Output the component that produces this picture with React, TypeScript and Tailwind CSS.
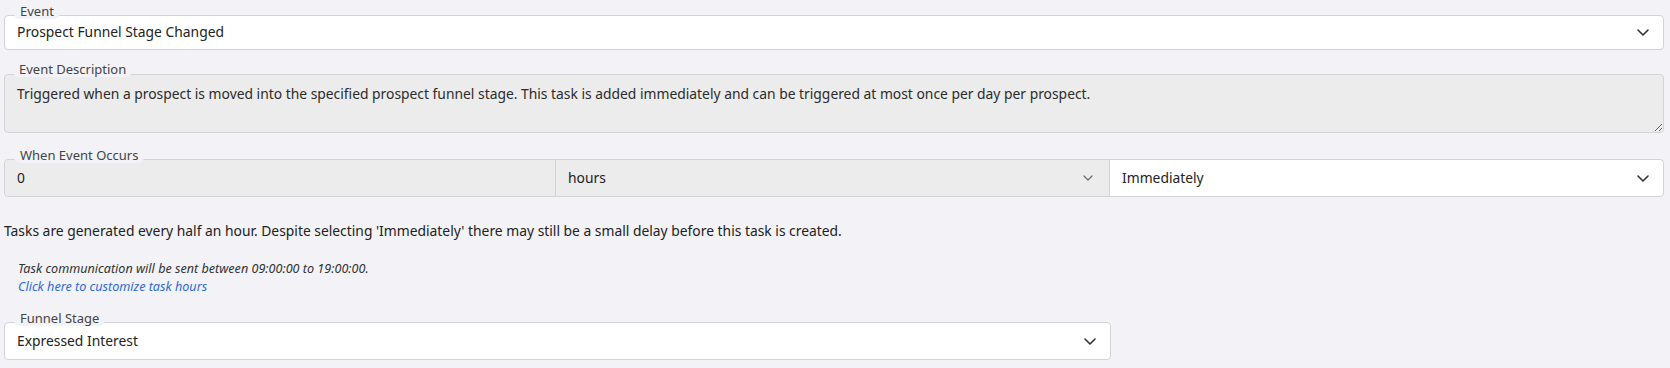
import React from "react";

const Chevron = ({ className = "" }: { className?: string }) => (
  <svg width="12" height="7" viewBox="0 0 12 7" fill="none" className={className}>
    <polyline points="1,1 6,6 11,1" stroke="currentColor" strokeWidth="1.6" strokeLinecap="round" strokeLinejoin="round" />
  </svg>
);

const FieldLabel = ({ children }: { children: React.ReactNode }) => (
  <span className="absolute left-[9px] top-[-12px] z-10 rounded-[6px] bg-[#f2f2f7] px-[6px] text-[13px] leading-[15px] text-[#444]">
    {children}
  </span>
);

export default function App() {
  return (
    <div
      className="min-h-[368px] w-full bg-[#f2f2f7] pl-[4px] pr-[6px] pt-[15px] text-[13.85px] text-[#222]"
      style={{ fontFamily: '"Noto Sans", "Open Sans", sans-serif' }}
    >
      {/* Event */}
      <div className="relative flex h-[35px] items-center justify-between rounded-[4px] border border-[#d2d3d8] bg-white pl-[12px] pr-[14px]">
        <FieldLabel>Event</FieldLabel>
        <span>Prospect Funnel Stage Changed</span>
        <Chevron className="text-[#333]" />
      </div>

      {/* Event Description */}
      <div className="relative mt-[24px]">
        <FieldLabel>Event Description</FieldLabel>
        <textarea
          readOnly
          value="Triggered when a prospect is moved into the specified prospect funnel stage. This task is added immediately and can be triggered at most once per day per prospect."
          className="block h-[59px] w-full rounded-[4px] border border-[#d2d3d8] bg-[#ececec] px-[12px] py-[9px] text-[13.85px] leading-[20px] text-[#2b2b2b] outline-none"
          style={{ fontFamily: '"Noto Sans", "Open Sans", sans-serif' }}
        />
      </div>

      {/* When Event Occurs */}
      <div className="relative mt-[26px] grid h-[38px] grid-cols-[550px_554px_1fr] rounded-[4px] border border-[#d2d3d8]">
        <FieldLabel>When Event Occurs</FieldLabel>
        <div className="flex items-center rounded-l-[4px] bg-[#ececec] pl-[12px]">0</div>
        <div className="flex items-center justify-between border-l border-[#d2d3d8] bg-[#ececec] pl-[12px] pr-[16px]">
          <span>hours</span>
          <svg width="10" height="6" viewBox="0 0 10 6" fill="none" className="text-[#6b6b6b]">
            <polyline points="1,1 5,5 9,1" stroke="currentColor" strokeWidth="1.2" strokeLinecap="round" strokeLinejoin="round" />
          </svg>
        </div>
        <div className="flex items-center justify-between rounded-r-[4px] border-l border-[#d2d3d8] bg-white pl-[12px] pr-[14px]">
          <span>Immediately</span>
          <Chevron className="text-[#333]" />
        </div>
      </div>

      <p className="mt-[24px] leading-[20px] text-[#222]">
        Tasks are generated every half an hour. Despite selecting 'Immediately' there may still be a small delay before this task is created.
      </p>

      <div className="mt-[19px] pl-[14px] text-[12.6px] italic leading-[18px]">
        <div className="text-[#333]">Task communication will be sent between 09:00:00 to 19:00:00.</div>
        <a className="text-[#2e6bd6]">Click here to customize task hours</a>
      </div>

      {/* Funnel Stage */}
      <div className="relative mt-[26px] flex h-[38px] w-2/3 items-center justify-between rounded-[4px] border border-[#d2d3d8] bg-white pl-[12px] pr-[14px]">
        <FieldLabel>Funnel Stage</FieldLabel>
        <span>Expressed Interest</span>
        <Chevron className="text-[#333]" />
      </div>
    </div>
  );
}
